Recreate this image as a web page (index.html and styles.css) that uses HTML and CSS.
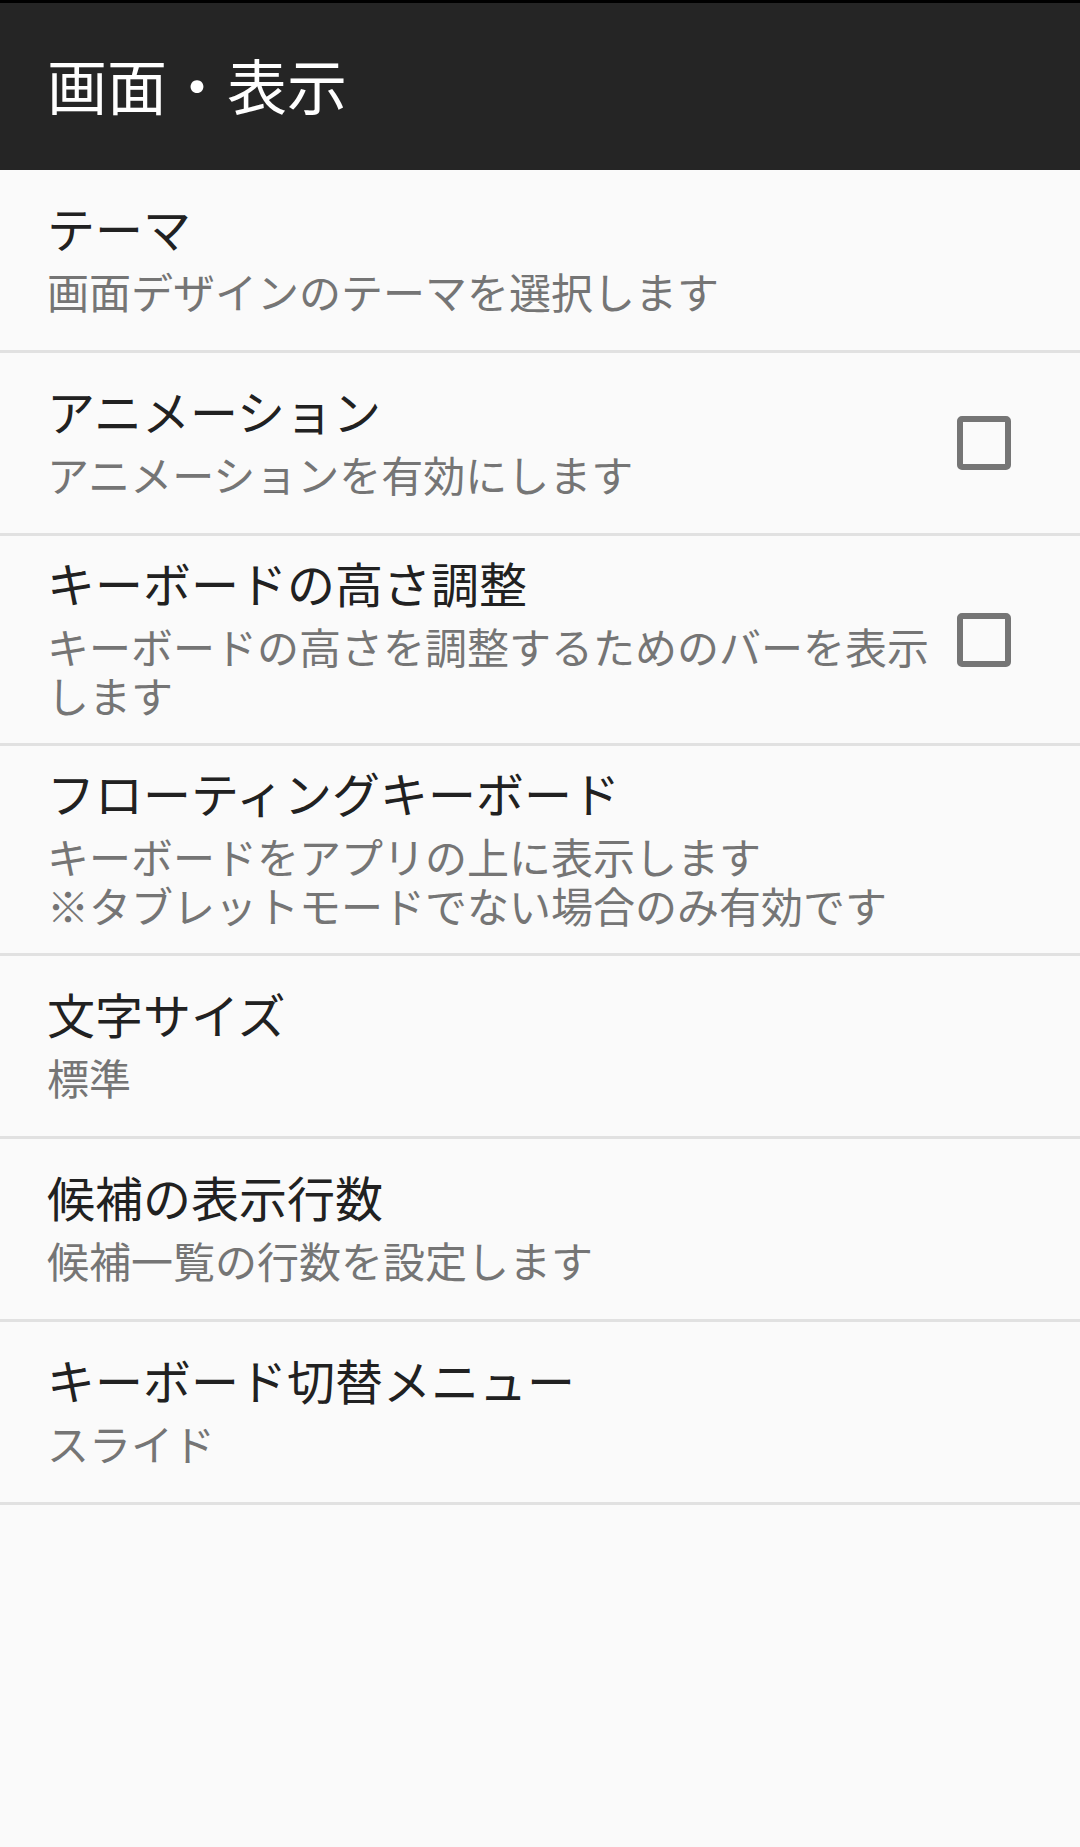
FILE: index.html
```html
<!DOCTYPE html>
<html lang="ja">
  <head>
    <meta charset="UTF-8" />
    <meta name="viewport" content="width=device-width, initial-scale=1.0" />
    <title>画面・表示</title>
    <link rel="stylesheet" href="styles.css">
  </head>
  <body>
    <div class="status-strip"></div>
    <div class="toolbar">
      <h1>画面・表示</h1>
    </div>

    <div class="pref-list">
      <div class="pref">
        <div class="pref-text">
          <div class="pref-title">テーマ</div>
          <div class="pref-summary">画面デザインのテーマを選択します</div>
        </div>
      </div>

      <div class="pref">
        <div class="pref-text">
          <div class="pref-title">アニメーション</div>
          <div class="pref-summary">アニメーションを有効にします</div>
        </div>
        <span class="checkbox"></span>
      </div>

      <div class="pref">
        <div class="pref-text">
          <div class="pref-title">キーボードの高さ調整</div>
          <div class="pref-summary">キーボードの高さを調整するためのバーを表示します</div>
        </div>
        <span class="checkbox"></span>
      </div>

      <div class="pref">
        <div class="pref-text">
          <div class="pref-title">フローティングキーボード</div>
          <div class="pref-summary">キーボードをアプリの上に表示します<br>※タブレットモードでない場合のみ有効です</div>
        </div>
      </div>

      <div class="pref">
        <div class="pref-text">
          <div class="pref-title">文字サイズ</div>
          <div class="pref-summary">標準</div>
        </div>
      </div>

      <div class="pref">
        <div class="pref-text">
          <div class="pref-title">候補の表示行数</div>
          <div class="pref-summary">候補一覧の行数を設定します</div>
        </div>
      </div>

      <div class="pref">
        <div class="pref-text">
          <div class="pref-title">キーボード切替メニュー</div>
          <div class="pref-summary">スライド</div>
        </div>
      </div>
    </div>
  </body>
</html>
```

FILE: styles.css
```css
* {
  margin: 0;
  padding: 0;
  box-sizing: border-box;
}

body {
  font-family: "Noto Sans CJK JP", "Noto Sans", sans-serif;
  background-color: #fafafa;
  color: #212121;
}

.status-strip {
  height: 3px;
  background-color: #000;
}

/* Toolbar */
.toolbar {
  height: 167px;
  background-color: #252525;
  display: flex;
  align-items: center;
  padding: 0 0 6px 47px;
}

.toolbar h1 {
  font-size: 60px;
  font-weight: 400;
  line-height: 72px;
  color: #fff;
}

/* Preference rows */
.pref {
  display: flex;
  align-items: center;
  min-height: 183px;
  padding: 19px 69px 24px 47px;
  border-bottom: 3px solid #e1e1e1;
}

.pref-text {
  flex: 1;
  min-width: 0;
}

.pref-title {
  font-size: 48px;
  line-height: 54px;
  color: #212121;
}

.pref-summary {
  margin-top: 12px;
  font-size: 42px;
  line-height: 49px;
  color: #757575;
}

.checkbox {
  flex: none;
  width: 54px;
  height: 54px;
  margin: 5px 0 0 17px;
  border: 6px solid #757575;
  border-radius: 5px;
}
```
